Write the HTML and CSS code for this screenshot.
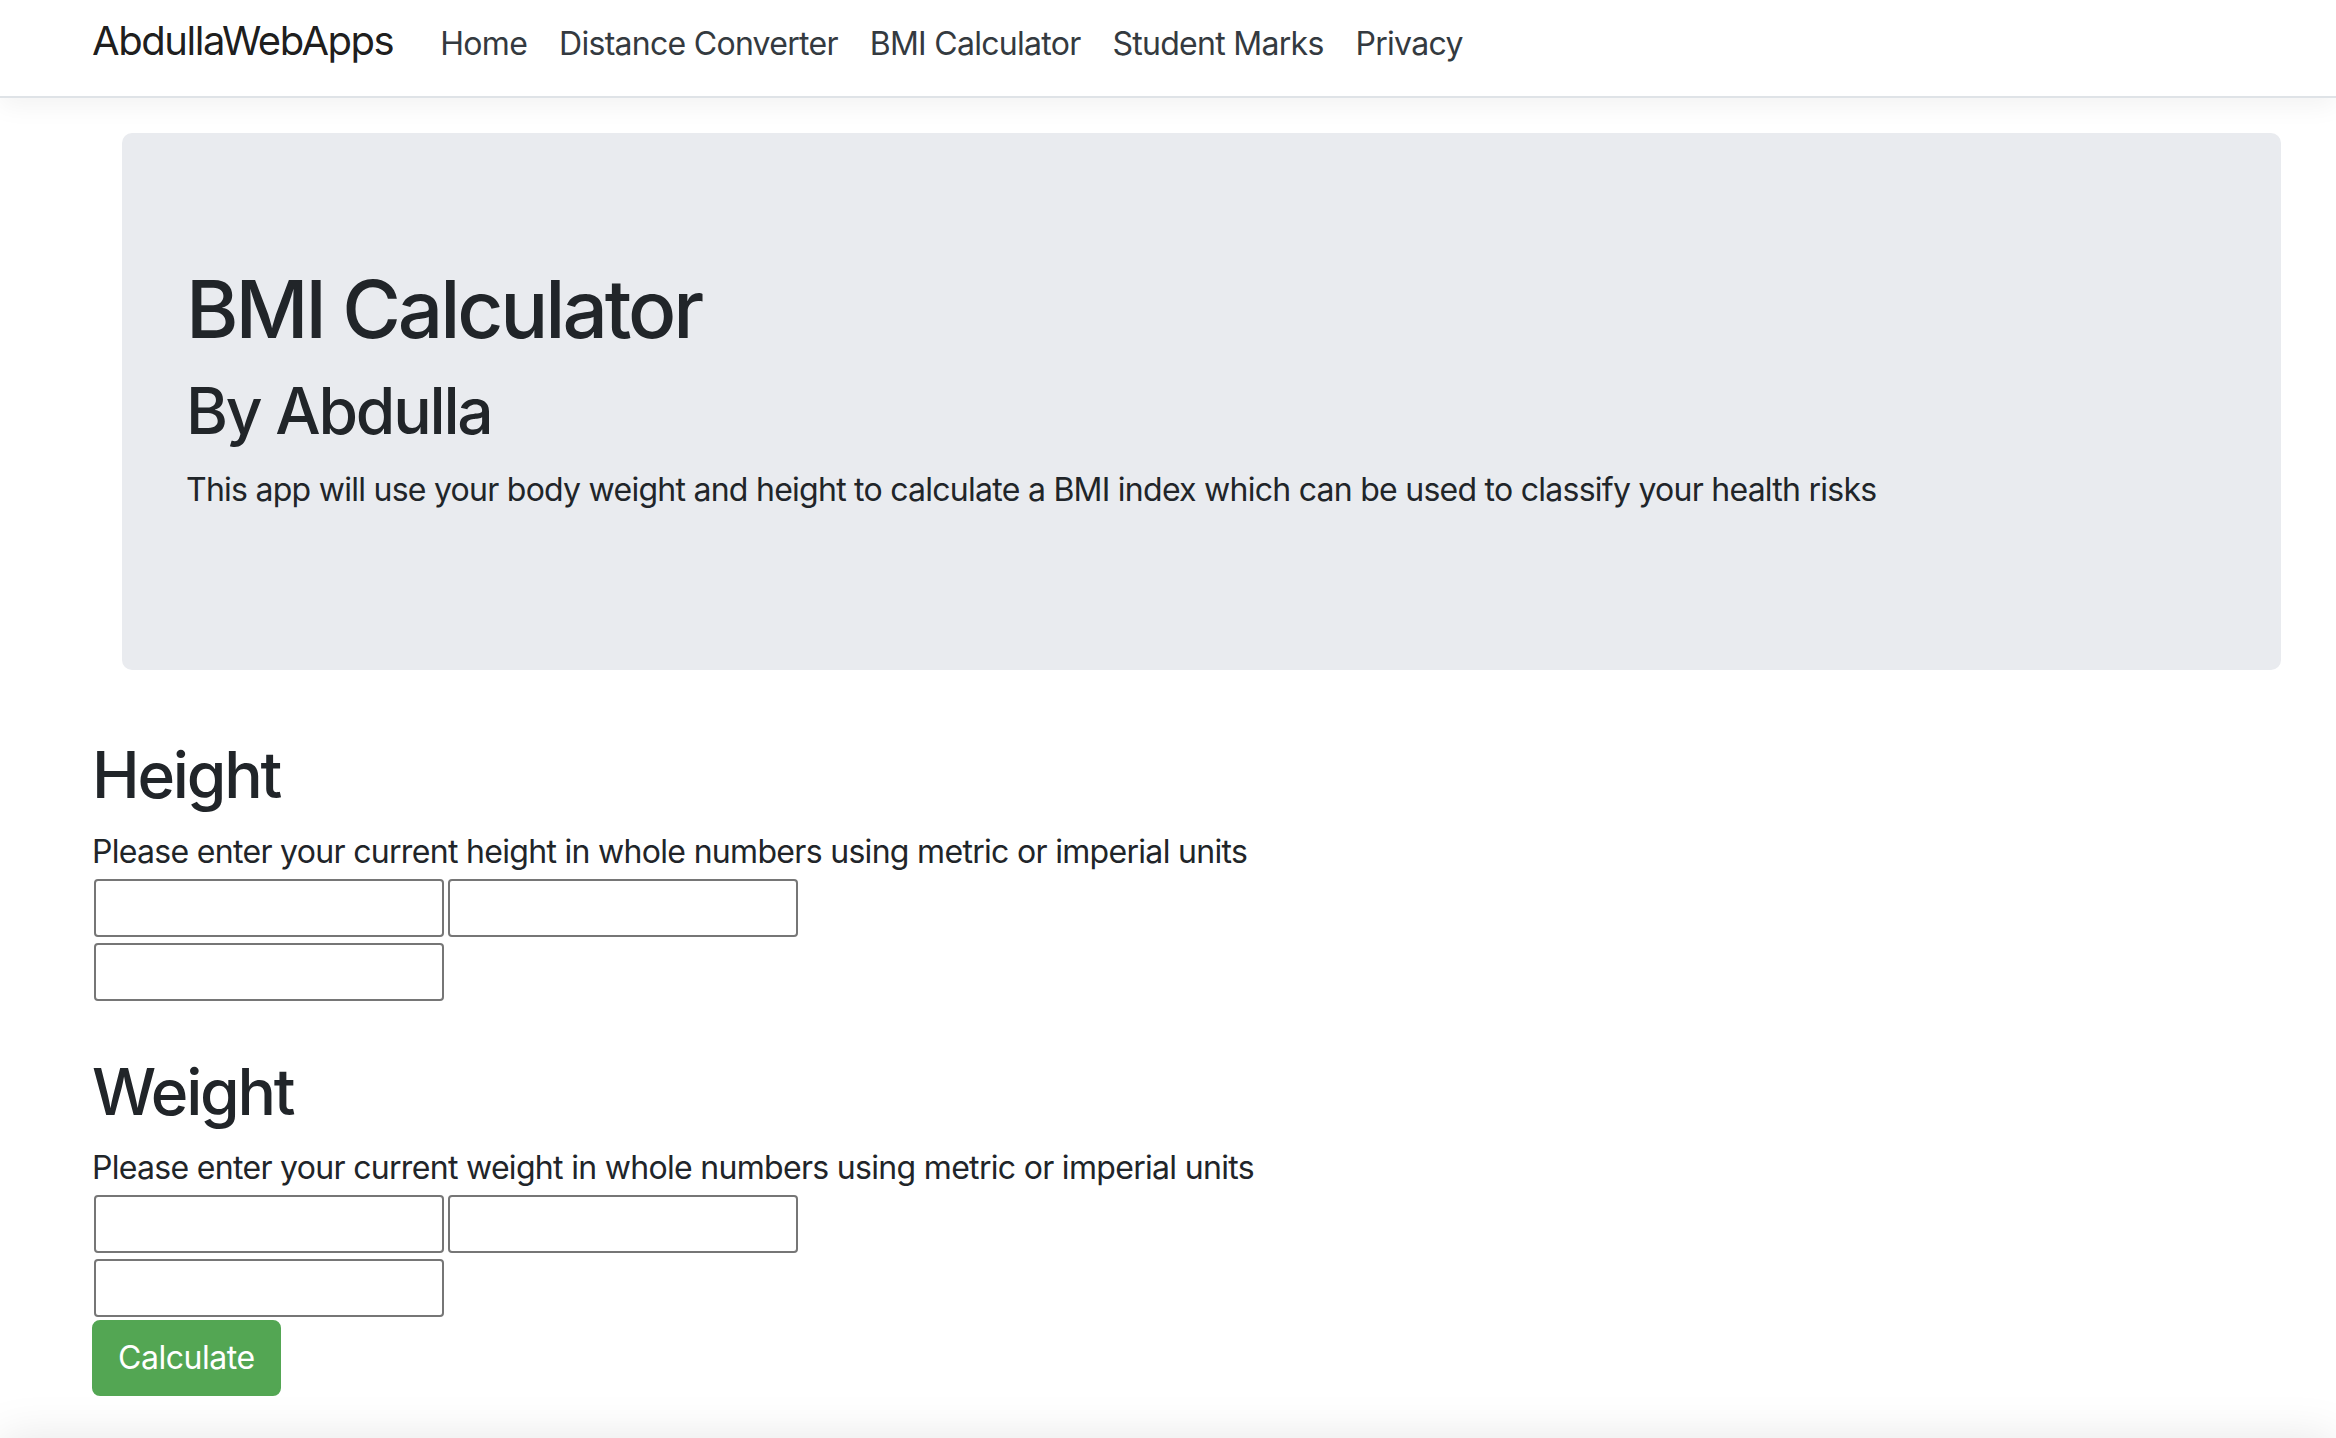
FILE: index.html
```html
<!DOCTYPE html>
<html lang="en">
<head>
<meta charset="utf-8">
<title>BMI Calculator - AbdullaWebApps</title>
<link rel="stylesheet" href="styles.css">
</head>
<body>
<header class="navbar">
  <a class="brand" href="#">AbdullaWebApps</a>
  <ul class="nav">
    <li><a class="nav-link" href="#">Home</a></li>
    <li><a class="nav-link" href="#">Distance Converter</a></li>
    <li><a class="nav-link" href="#">BMI Calculator</a></li>
    <li><a class="nav-link" href="#">Student Marks</a></li>
    <li><a class="nav-link" href="#">Privacy</a></li>
  </ul>
</header>
<main class="page">
  <section class="jumbotron">
    <h1 class="title">BMI Calculator</h1>
    <h2 class="subtitle">By Abdulla</h2>
    <p class="lead">This app will use your body weight and height to calculate a BMI index which can be used to classify your health risks</p>
  </section>
  <section class="field">
    <h2 class="field-title">Height</h2>
    <p class="hint">Please enter your current height in whole numbers using metric or imperial units</p>
    <div class="inputs">
      <div class="input-row"><input class="box" type="text"><input class="box" type="text"></div>
      <div class="input-row"><input class="box" type="text"></div>
    </div>
  </section>
  <section class="field field-weight">
    <h2 class="field-title">Weight</h2>
    <p class="hint">Please enter your current weight in whole numbers using metric or imperial units</p>
    <div class="inputs">
      <div class="input-row"><input class="box" type="text"><input class="box" type="text"></div>
      <div class="input-row"><input class="box" type="text"></div>
    </div>
    <button class="btn" type="button">Calculate</button>
  </section>
</main>
<footer class="footer"></footer>
</body>
</html>
```
FILE: styles.css
```css
html, body {
  margin: 0;
  padding: 0;
  background: #fff;
}
body {
  font-family: Inter, "Noto Sans", "Liberation Sans", sans-serif;
  color: #212529;
  font-size: 32px;
  line-height: 1.5;
}
.navbar {
  display: flex;
  align-items: baseline;
  box-sizing: border-box;
  height: 98px;
  padding: 11px 0 0 92px;
  border-bottom: 2px solid #dfe3e7;
  box-shadow: 0 8px 24px rgba(0, 0, 0, 0.05);
  position: relative;
  z-index: 1;
}
.brand {
  font-size: 40px;
  line-height: 60px;
  color: rgba(0, 0, 0, 0.9);
  text-decoration: none;
  margin-right: 31px;
  letter-spacing: -1.45px;
}
.nav {
  display: flex;
  list-style: none;
  margin: 0;
  padding: 0;
}
.nav-link {
  display: block;
  padding: 0 16px;
  font-size: 32px;
  line-height: 48px;
  color: #343a40;
  text-decoration: none;
  letter-spacing: -0.72px;
}
.page {
  padding: 35px 0 0 92px;
}
.jumbotron {
  margin: 0 55px 0 30px;
  padding: 128px 64px 124px;
  background: #e9ebef;
  border-radius: 10px;
}
.title {
  margin: 0 0 16px;
  font-size: 80px;
  line-height: 1.2;
  font-weight: 500;
  letter-spacing: -3.1px;
}
.subtitle, .field-title {
  margin: 0 0 16px;
  font-size: 64px;
  line-height: 1.2;
  font-weight: 500;
  letter-spacing: -2.2px;
}
.lead {
  margin: 0 0 32px;
  letter-spacing: -0.74px;
}
.field {
  margin-top: 67px;
}
.field-weight {
  margin-top: 53px;
}
.field-title {
  margin-bottom: 14px;
}
.hint {
  margin: 0 0 3px;
  letter-spacing: -0.69px;
}
.inputs {
  display: flex;
  flex-direction: column;
  gap: 6px;
  padding-left: 2px;
}
.input-row {
  display: flex;
  gap: 4px;
}
.box {
  width: 350px;
  height: 58px;
  box-sizing: border-box;
  margin: 0;
  border: 2px solid #767676;
  border-radius: 4px;
  background: #fff;
  font: inherit;
}
.btn {
  margin-top: 3px;
  padding: 12px 24px;
  border: 2px solid #53a653;
  border-radius: 8px;
  background: #53a653;
  color: #fff;
  font: inherit;
  line-height: 48px;
  letter-spacing: -0.45px;
  cursor: pointer;
}
.footer {
  margin-top: 42px;
  height: 60px;
  box-shadow: 0 0 48px rgba(0, 0, 0, 0.1);
}
```
